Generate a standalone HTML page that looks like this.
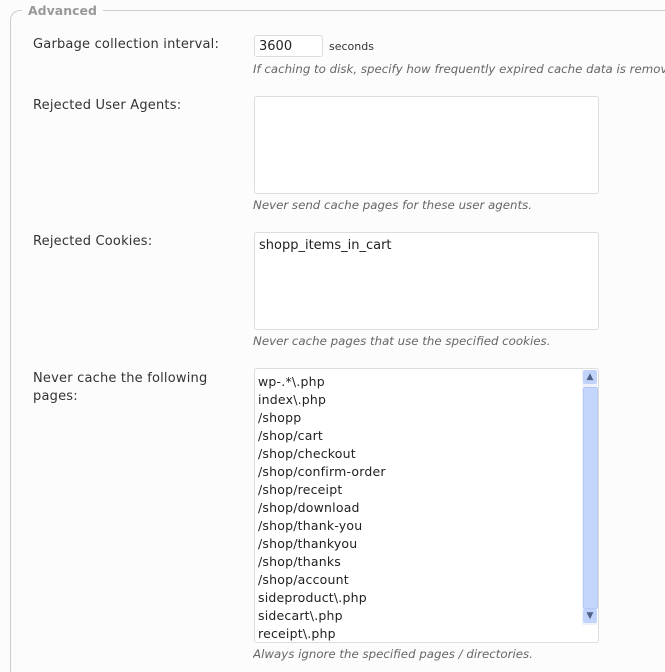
<!DOCTYPE html>
<html style="overflow:hidden;height:672px"><head><style>
body{margin:0;background:#fcfcfc;font-family:"DejaVu Sans",Verdana,sans-serif;font-size:13px;color:#333;width:665px;height:672px;overflow:hidden;position:relative}
.fs{position:absolute;left:10px;top:10px;width:655px;height:662px;border-left:1px solid #ccc;border-top:1px solid #ccc;border-top-left-radius:10px;box-sizing:border-box}
.lg{position:absolute;left:22px;top:3px;background:#fcfcfc;padding:0 6px;color:#999;font-weight:bold;font-size:12.5px}
.l{position:absolute;left:33px;letter-spacing:0.2px}
.box{position:absolute;left:254px;width:345px;background:#fff;border:1px solid #ddd;border-radius:3px;box-sizing:border-box}
.h{position:absolute;left:253px;font-style:italic;color:#666;font-size:11.8px;white-space:nowrap;overflow:hidden;width:412px}
.lst{position:absolute;left:258px;top:373px;line-height:18px;font-size:12.5px;color:#222;letter-spacing:0.2px}
</style></head><body>
<div class="fs"></div>
<div class="lg">Advanced</div>
<div class="l" style="top:37px">Garbage collection interval:</div>
<div class="box" style="top:35px;width:69px;height:22px;padding:3px 4px;color:#222">3600</div>
<div style="position:absolute;left:329px;top:40px;font-size:11px">seconds</div>
<div class="h" style="top:62px">If caching to disk, specify how frequently expired cache data is removed.</div>
<div class="l" style="top:98px">Rejected User Agents:</div>
<div class="box" style="top:96px;height:98px"></div>
<div class="h" style="top:198px">Never send cache pages for these user agents.</div>
<div class="l" style="top:234px">Rejected Cookies:</div>
<div class="box" style="top:232px;height:98px;padding:5px 4px;color:#222">shopp_items_in_cart</div>
<div class="h" style="top:334px">Never cache pages that use the specified cookies.</div>
<div class="l" style="top:370px;line-height:18px">Never cache the following<br>pages:</div>
<div class="box" style="top:368px;height:275px"></div>
<div class="lst">wp-.*\.php<br>index\.php<br>/shopp<br>/shop/cart<br>/shop/checkout<br>/shop/confirm-order<br>/shop/receipt<br>/shop/download<br>/shop/thank-you<br>/shop/thankyou<br>/shop/thanks<br>/shop/account<br>sideproduct\.php<br>sidecart\.php<br>receipt\.php</div>
<div style="position:absolute;left:582px;top:370px;width:15px;height:255px;background:#eef2fb"></div>
<div style="position:absolute;left:583px;top:370px;width:14px;height:14px;background:#c2d3fb;border-radius:2px;color:#4d6185;font-size:9px;text-align:center;line-height:14px">▲</div>
<div style="position:absolute;left:583px;top:387px;width:13px;height:220px;background:#c5d6fc;border:1px solid #b4c8f6;border-radius:2px"></div>
<div style="position:absolute;left:583px;top:609px;width:14px;height:14px;background:#c2d3fb;border-radius:2px;color:#4d6185;font-size:9px;text-align:center;line-height:14px">▼</div>
<div class="h" style="top:647px">Always ignore the specified pages / directories.</div>
</body></html>
